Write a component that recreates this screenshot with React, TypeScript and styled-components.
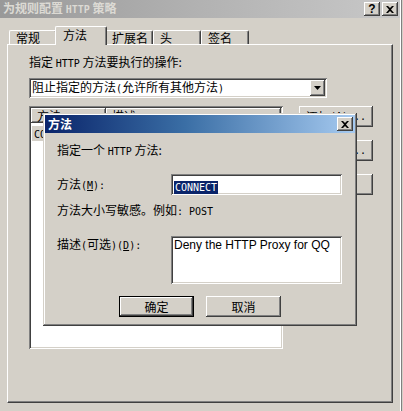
import styled, { createGlobalStyle, css } from "styled-components";

const GlobalStyle = createGlobalStyle`
  html, body {
    margin: 0;
    padding: 0;
    background: #d4d0c8;
  }
  body {
    font-family: "Noto Sans CJK SC", "Liberation Sans", sans-serif;
    font-size: 12px;
    color: #000;
  }
`;

const raised = css`
  box-shadow: inset -1px -1px #404040, inset 1px 1px #ffffff, inset -2px -2px #808080,
    inset 2px 2px #d4d0c8;
`;

const sunken = css`
  box-shadow: inset 1px 1px #808080, inset -1px -1px #ffffff, inset 2px 2px #404040,
    inset -2px -2px #d4d0c8;
`;

const Screen = styled.div`
  width: 403px;
  height: 411px;
  display: flex;
  overflow: hidden;
  background: #d4d0c8;
`;

const Win = styled.div`
  position: relative;
  width: 400px;
  height: 411px;
  display: flex;
  flex-direction: column;
`;

const Edge = styled.div`
  flex: 1;
  border-left: 1px solid #ffffff;
  box-shadow: inset 1px 0 #808080;
`;

const TitleBar = styled.div<{ $active?: boolean }>`
  height: 18px;
  flex: none;
  display: flex;
  align-items: center;
  background: ${(p) =>
    p.$active
      ? "linear-gradient(90deg, #0a246a 0%, #3a6ea5 45%, #a6caf0 100%)"
      : "linear-gradient(90deg, #999999 0%, #b2b2b2 50%, #c8c8c8 100%)"};
  color: ${(p) => (p.$active ? "#ffffff" : "#dcdad4")};
`;

const TitleText = styled.div`
  flex: 1;
  padding-left: 3px;
  font-weight: bold;
  font-size: 12px;
  line-height: 18px;
  white-space: nowrap;
`;

const TitleButtons = styled.div`
  display: flex;
  gap: 2px;
  margin-right: 2px;
`;

const CapButton = styled.div`
  width: 16px;
  height: 14px;
  background: #d4d0c8;
  ${raised};
  display: flex;
  align-items: center;
  justify-content: center;
  color: #000;
  font-family: "Liberation Sans", sans-serif;
  font-weight: bold;
  font-size: 12px;
  line-height: 14px;
`;

const Latin = styled.span`
  font-family: "DejaVu Sans Mono", "Liberation Mono", monospace;
  font-size: 10px;
`;

const TabStrip = styled.div`
  display: flex;
  align-items: flex-end;
  height: 18px;
  margin-top: 8px;
  padding-left: 9px;
  position: relative;
  z-index: 1;
`;

const Tab = styled.div<{ $selected?: boolean }>`
  box-sizing: border-box;
  width: ${(p) => (p.$selected ? 52 : 48)}px;
  height: ${(p) => (p.$selected ? 19 : 14)}px;
  margin: ${(p) => (p.$selected ? "0 -2px -1px -2px" : "0")};
  padding-left: ${(p) => (p.$selected ? 7 : 6)}px;
  background: #d4d0c8;
  border-top: 1px solid #ffffff;
  border-left: 1px solid #ffffff;
  border-right: 1px solid #404040;
  border-radius: 2px 2px 0 0;
  box-shadow: inset -1px 0 #808080;
  font-size: 12px;
  line-height: ${(p) => (p.$selected ? 15 : 13)}px;
  white-space: nowrap;
  position: relative;
  z-index: ${(p) => (p.$selected ? 2 : 1)};
`;

const Panel = styled.div`
  box-sizing: border-box;
  margin-left: 7px;
  width: 386px;
  height: 359px;
  border-top: 1px solid #ffffff;
  border-left: 1px solid #ffffff;
  border-right: 1px solid #404040;
  border-bottom: 1px solid #404040;
  box-shadow: inset -1px -1px #808080;
  padding: 9px 0 0 21px;
`;

const Label = styled.div`
  line-height: 16px;
  white-space: nowrap;
`;

const Combo = styled.div`
  box-sizing: border-box;
  margin-top: 6px;
  width: 298px;
  height: 20px;
  background: #ffffff;
  ${sunken};
  display: flex;
  align-items: center;
  padding: 2px 2px 2px 3px;
`;

const ComboText = styled.div`
  flex: 1;
  line-height: 16px;
  white-space: nowrap;
`;

const DropButton = styled.div`
  width: 15px;
  height: 16px;
  background: #d4d0c8;
  ${raised};
  display: flex;
  align-items: center;
  justify-content: center;
`;

const ListRow = styled.div`
  display: flex;
  margin-top: 8px;
`;

const ListView = styled.div`
  box-sizing: border-box;
  width: 254px;
  height: 243px;
  background: #ffffff;
  ${sunken};
  padding: 2px;
`;

const HeaderRow = styled.div`
  display: flex;
  height: 15px;
`;

const HeaderCell = styled.div<{ $w: number }>`
  box-sizing: border-box;
  width: ${(p) => p.$w}px;
  background: #d4d0c8;
  ${raised};
  padding-left: 6px;
  line-height: 15px;
`;

const ListItem = styled.div`
  margin-top: 3px;
  margin-left: 1px;
  display: inline-block;
  background: #d4d0c8;
  padding: 0 2px;
  line-height: 13px;
`;

const SideButtons = styled.div`
  display: flex;
  flex-direction: column;
  gap: 13px;
  margin-left: 16px;
`;

const PushButton = styled.div<{ $w?: number; $default?: boolean }>`
  box-sizing: border-box;
  width: ${(p) => p.$w ?? 74}px;
  height: 21px;
  background: #d4d0c8;
  display: flex;
  align-items: center;
  justify-content: center;
  white-space: nowrap;
  font-size: 12px;
  ${(p) =>
    p.$default
      ? css`
          border: 1px solid #000;
          box-shadow: inset -1px -1px #404040, inset 1px 1px #ffffff, inset -2px -2px #808080;
        `
      : raised};
`;

const Modal = styled.div`
  position: absolute;
  left: 43px;
  top: 113px;
  box-sizing: border-box;
  width: 314px;
  height: 213px;
  padding: 2px 2px 3px 2px;
  background: #d4d0c8;
  box-shadow: inset -1px -1px #404040, inset 1px 1px #d4d0c8, inset -2px -2px #808080,
    inset 2px 2px #ffffff;
  display: flex;
  flex-direction: column;
  z-index: 5;
`;

const ModalBody = styled.div`
  padding: 9px 0 0 12px;
  display: flex;
  flex-direction: column;
`;

const FieldRow = styled.div<{ $top: number; $align?: string }>`
  display: flex;
  align-items: ${(p) => p.$align ?? "center"};
  margin-top: ${(p) => p.$top}px;
`;

const FieldLabel = styled.div`
  width: 114px;
  line-height: 16px;
  white-space: nowrap;
`;

const TextBox = styled.div<{ $h: number }>`
  box-sizing: border-box;
  width: 171px;
  height: ${(p) => p.$h}px;
  background: #ffffff;
  ${sunken};
  padding: 3px 3px;
`;

const Selected = styled.span`
  background: #0a246a;
  color: #ffffff;
  font-family: "DejaVu Sans Mono", "Liberation Mono", monospace;
  font-size: 10px;
  line-height: 13px;
  display: inline-block;
  padding: 0 1px;
`;

const Memo = styled.div`
  font-family: "Liberation Sans", sans-serif;
  font-size: 12px;
  line-height: 14px;
  margin-top: -1px;
`;

const DialogButtons = styled.div`
  display: flex;
  justify-content: center;
  gap: 12px;
  margin-top: 12px;
  padding-right: 12px;
`;

const CloseGlyph = () => (
  <svg width="8" height="7" viewBox="0 0 8 7">
    <path d="M0 0h2l2 2 2-2h2L5 3.5 8 7H6L4 5 2 7H0l3-3.5z" fill="#000" />
  </svg>
);

const DropArrow = () => (
  <svg width="7" height="4" viewBox="0 0 7 4">
    <path d="M0 0h7L3.5 4z" fill="#000" />
  </svg>
);

export default function App() {
  return (
    <>
      <GlobalStyle />
      <Screen>
        <Win>
          <TitleBar>
            <TitleText>
              为规则配置 <Latin style={{ fontWeight: "bold" }}>HTTP</Latin> 策略
            </TitleText>
            <TitleButtons>
              <CapButton>?</CapButton>
              <CapButton>
                <CloseGlyph />
              </CapButton>
            </TitleButtons>
          </TitleBar>

          <TabStrip>
            <Tab>常规</Tab>
            <Tab $selected>方法</Tab>
            <Tab>扩展名</Tab>
            <Tab>头</Tab>
            <Tab>签名</Tab>
          </TabStrip>

          <Panel>
            <Label>
              指定 <Latin>HTTP</Latin> 方法要执行的操作:
            </Label>
            <Combo>
              <ComboText>
                阻止指定的方法<Latin>(</Latin>允许所有其他方法<Latin>)</Latin>
              </ComboText>
              <DropButton>
                <DropArrow />
              </DropButton>
            </Combo>
            <ListRow>
              <ListView>
                <HeaderRow>
                  <HeaderCell $w={75}>方法</HeaderCell>
                  <HeaderCell $w={175}>描述</HeaderCell>
                </HeaderRow>
                <ListItem>
                  <Latin>CONNECT</Latin>
                </ListItem>
              </ListView>
              <SideButtons>
                <PushButton>
                  添加<Latin>(A)...</Latin>
                </PushButton>
                <PushButton>
                  编辑<Latin>(E)...</Latin>
                </PushButton>
                <PushButton>
                  删除<Latin>(R)</Latin>
                </PushButton>
              </SideButtons>
            </ListRow>
          </Panel>

          <Modal>
            <TitleBar $active>
              <TitleText>方法</TitleText>
              <TitleButtons>
                <CapButton>
                  <CloseGlyph />
                </CapButton>
              </TitleButtons>
            </TitleBar>
            <ModalBody>
              <Label>
                指定一个 <Latin>HTTP</Latin> 方法:
              </Label>
              <FieldRow $top={14}>
                <FieldLabel>
                  方法<Latin>(</Latin>
                  <Latin>
                    <u>M</u>
                  </Latin>
                  <Latin>):</Latin>
                </FieldLabel>
                <TextBox $h={21}>
                  <Selected>CONNECT</Selected>
                </TextBox>
              </FieldRow>
              <Label style={{ marginTop: 7 }}>
                方法大小写敏感。例如<Latin>: POST</Latin>
              </Label>
              <FieldRow $top={16} $align="flex-start">
                <FieldLabel>
                  描述<Latin>(</Latin>可选<Latin>)(</Latin>
                  <Latin>
                    <u>D</u>
                  </Latin>
                  <Latin>):</Latin>
                </FieldLabel>
                <TextBox $h={48}>
                  <Memo>Deny the HTTP Proxy for QQ</Memo>
                </TextBox>
              </FieldRow>
              <DialogButtons>
                <PushButton $w={75} $default>
                  确定
                </PushButton>
                <PushButton $w={75}>取消</PushButton>
              </DialogButtons>
            </ModalBody>
          </Modal>
        </Win>
        <Edge />
      </Screen>
    </>
  );
}
